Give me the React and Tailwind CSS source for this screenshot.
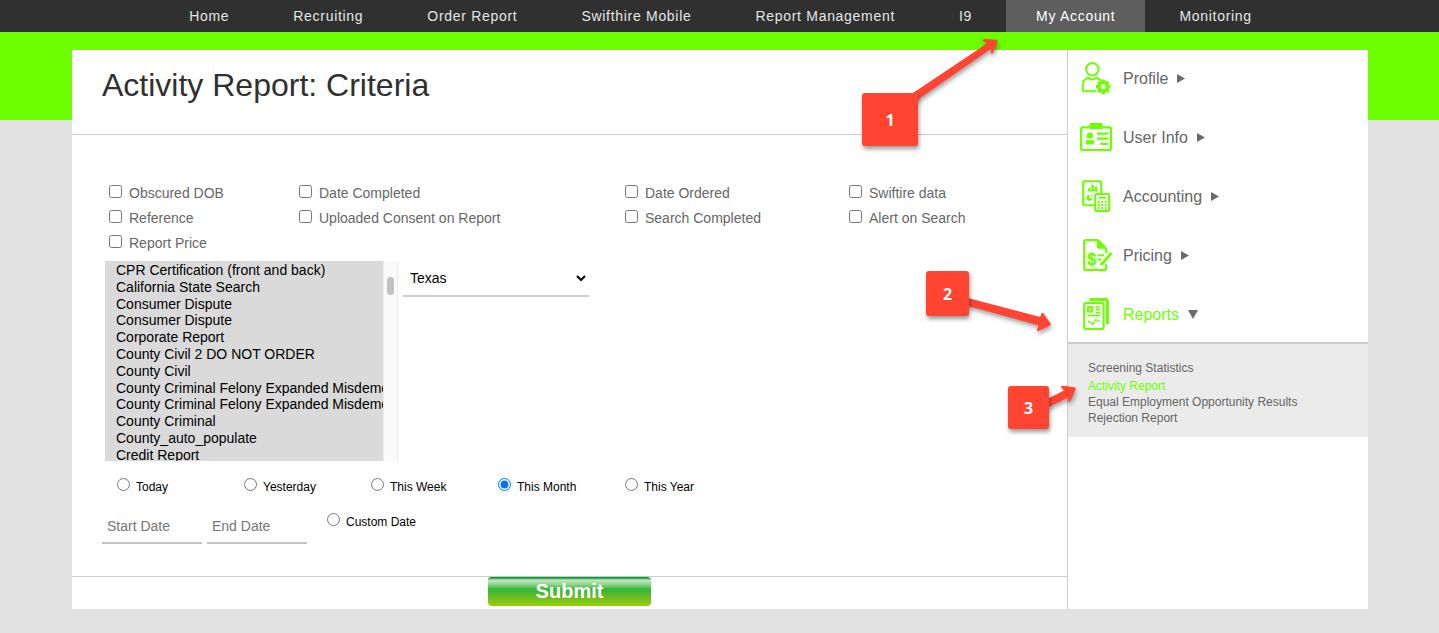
import React, { useState } from "react";

const navItems = [
  "Home",
  "Recruiting",
  "Order Report",
  "Swifthire Mobile",
  "Report Management",
  "I9",
  "My Account",
  "Monitoring",
];

const fields = [
  "Obscured DOB",
  "Date Completed",
  "Date Ordered",
  "Swiftire data",
  "Reference",
  "Uploaded Consent on Report",
  "Search Completed",
  "Alert on Search",
  "Report Price",
];

const searches = [
  "CPR Certification (front and back)",
  "California State Search",
  "Consumer Dispute",
  "Consumer Dispute",
  "Corporate Report",
  "County Civil 2 DO NOT ORDER",
  "County Civil",
  "County Criminal Felony Expanded Misdemeanor",
  "County Criminal Felony Expanded Misdemeanor",
  "County Criminal",
  "County_auto_populate",
  "Credit Report",
];

const ranges = ["Today", "Yesterday", "This Week", "This Month", "This Year"];

const GEAR_ANGLES = [0, 45, 90, 135];

function ProfileIcon() {
  return (
    <svg
      aria-hidden="true"
      className="h-8 w-8"
      fill="none"
      stroke="currentColor"
      strokeWidth="2"
      viewBox="0 0 32 32">
      <circle cx="12.3" cy="7.3" r="6.2" />
      <path
        d="M15.2 29.3H4.6q-1.8 0-1.8-1.8v-4.7q0-4.6 4.6-6.6l1.2-.4q3.7 3.4 7.4 0l1.2.4q2 .8 3 1.8"
        strokeLinecap="round"
        strokeLinejoin="round"
      />
      <circle cx="23.2" cy="24.8" r="4.200" strokeWidth="3.400" />
      {GEAR_ANGLES.map((angle) => (
        <path
          d="M23.2 17.600v2.6M23.2 29.400v2.6"
          key={angle}
          strokeWidth="3.400"
          transform={`rotate(${angle} 23.2 24.8)`}
        />
      ))}
    </svg>
  );
}

function UserInfoIcon() {
  return (
    <svg
      aria-hidden="true"
      className="h-8 w-8"
      fill="none"
      stroke="currentColor"
      strokeWidth="2.2"
      viewBox="0 0 32 32">
      <rect height="22.6" rx="1.5" width="29.800" x="1.1" y="6.4" />
      <rect
        fill="currentColor"
        height="6"
        rx="1"
        stroke="none"
        width="13"
        x="9.6"
        y="2"
      />
      <circle cx="9.8" cy="14.6" fill="currentColor" r="3.2" stroke="none" />
      <path
        d="M5.4 21.5q0-2.6 2.4-2.8 2 1 4 0 2.4.2 2.4 2.8 0 2-1.6 2H7q-1.6 0-1.6-2z"
        fill="currentColor"
        stroke="none"
      />
      <path d="M17.6 12.6h9.8M17.6 17.6h9.8M21 22.8h6.4" strokeLinecap="round" />
    </svg>
  );
}

function AccountingIcon() {
  return (
    <svg
      aria-hidden="true"
      className="h-8 w-8"
      fill="none"
      stroke="currentColor"
      strokeWidth="2.1"
      viewBox="0 0 32 32">
      <path
        d="M14.8 25.2H4.6q-1.4 0-1.4-1.4V2.6q0-1.4 1.4-1.4h15.2q1.4 0 1.4 1.4v10.6"
        strokeLinejoin="round"
      />
      <path d="M7.6 10.6h10.2" strokeWidth="1.6" />
      <path d="M9.4 10.4V8M12.6 10.4V4.8M15.800 10.4V6.800" strokeWidth="2.4" />
      <path
        d="M9.4 14.800v3.4h3a3 3 0 1 1-3-3.4zM11 14.4a2.6 2.6 0 0 1 2 2.2h-2z"
        fill="currentColor"
        stroke="none"
      />
      <rect height="17" rx="1.4" width="14" x="15.2" y="14" />
      <path d="M18.4 17.8h7.8" strokeWidth="1.8" />
      <path
        d="M17.8 22h9.4M17.8 25h9.4M17.8 28h9.4"
        strokeDasharray="2 1.4"
        strokeWidth="1.8"
      />
    </svg>
  );
}

function PricingIcon() {
  return (
    <svg
      aria-hidden="true"
      className="h-8 w-8"
      fill="none"
      stroke="currentColor"
      strokeWidth="2.2"
      viewBox="0 0 32 32">
      <path
        d="M18 1.2H5.8q-1.6 0-1.6 1.6v26.4q0 1.6 1.6 1.6h18.8q1.6 0 1.6-1.6v-4M26.2 9v5"
        strokeLinejoin="round"
      />
      <path
        d="M17 .3q2 .2 3.8 2l4.6 5q1.6 1.8 1.8 3.4-1.6-1-4.2-1h-4.2q-2 0-2-2V4.4Q16.800 1.6 17 .3z"
        fill="currentColor"
        stroke="none"
      />
      <path d="M17.6 16.2h6.6M17.6 20.6h4" strokeWidth="2" />
      <path d="M30.6 15 22.4 24.4" strokeLinecap="round" strokeWidth="2.8" />
      <path d="m20.800 22.6 2.8 2.4-3.800 2z" fill="currentColor" stroke="none" />
      <text
        className="font-bold"
        fill="currentColor"
        fontSize="16"
        stroke="currentColor"
        strokeWidth="0.5"
        textAnchor="middle"
        x="11.6"
        y="26">
        $
      </text>
    </svg>
  );
}

function ReportsIcon() {
  return (
    <svg
      aria-hidden="true"
      className="h-8 w-8"
      fill="none"
      stroke="currentColor"
      strokeWidth="2.1"
      viewBox="0 0 32 32">
      <path d="M9.4 1.4h16q2 0 2 2V26" strokeWidth="3" />
      <rect height="26" rx="1.6" width="19.4" x="4.2" y="5" />
      <rect height="4.4" width="4.2" x="8" y="9.2" />
      <path d="M15.6 9h4.800M15.6 11.8h4.800M15.6 14.6h4.800" strokeWidth="1.6" />
      <path d="M7.4 17.6h13" strokeWidth="1.6" />
      <path
        d="m8 23 4.800 3.400 2.800-4.8 4.800 2.4"
        strokeDasharray="2.8 .5"
        strokeWidth="1.6"
      />
    </svg>
  );
}

const sections = [
  { label: "Profile", Icon: ProfileIcon },
  { label: "User Info", Icon: UserInfoIcon },
  { label: "Accounting", Icon: AccountingIcon },
  { label: "Pricing", Icon: PricingIcon },
  { label: "Reports", Icon: ReportsIcon, open: true },
];

function TopNav() {
  return (
    <nav className="flex h-8 justify-center gap-1 bg-[#303030] pl-0.5 text-sm tracking-wider text-[#e4e4e4]">
      {navItems.map((item) => (
        <a
          className={
            item === "My Account"
              ? "flex items-center bg-[#5e5e5e] px-[30px] whitespace-nowrap text-white"
              : "flex items-center px-[30px] whitespace-nowrap"
          }
          href="#"
          key={item}>
          {item}
        </a>
      ))}
    </nav>
  );
}

function CriteriaForm() {
  const [range, setRange] = useState("This Month");

  return (
    <form onSubmit={(e) => e.preventDefault()}>
      <div className="px-[30px] pt-[46px] pb-8">
        <div className="grid grid-cols-[190px_326px_224px_auto] pl-[7px] text-sm text-[#666]">
          {fields.map((field) => (
            <label
              className="flex items-baseline gap-[7px] leading-[25px]"
              key={field}>
              <input className="h-[13px] w-[13px]" type="checkbox" />
              {field}
            </label>
          ))}
        </div>

        <div className="mt-[5px] flex items-start gap-[5px] pl-[3px] text-sm text-black">
          <div className="flex h-[200px] w-[293px]">
            <select
              aria-label="Searches"
              className="h-full w-[278px] appearance-none overflow-hidden bg-[#dadada] pt-px pl-[11px] leading-none"
              multiple
              size={12}>
              {searches.map((search, index) => (
                <option className="p-0" key={index}>
                  {search}
                </option>
              ))}
            </select>
            <div className="flex-1 border-x border-[#ebebeb] bg-[#fafafa] px-[3px] pt-4">
              <div className="h-[18px] rounded-full bg-[#c1c1c1]" />
            </div>
          </div>

          <div className="relative">
            <select
              aria-label="State"
              className="h-9 w-[186px] appearance-none border-b-2 border-[#ccc] bg-white pl-[7px]">
              <option>Texas</option>
            </select>
            <svg
              aria-hidden="true"
              className="pointer-events-none absolute top-[13px] right-[3px] h-2 w-[10px]"
              fill="none"
              stroke="black"
              strokeWidth="2"
              viewBox="0 0 10 8">
              <path d="m1 2 4 4 4-4" />
            </svg>
          </div>
        </div>

        <div className="mt-[14px] grid grid-cols-[repeat(5,127px)] pl-[15px] text-xs text-black">
          {ranges.map((name) => (
            <label
              className="flex items-baseline gap-1.5 leading-6"
              key={name}>
              <input
                checked={range === name}
                className="h-[13px] w-[13px]"
                name="range"
                onChange={() => setRange(name)}
                type="radio"
              />
              {name}
            </label>
          ))}
        </div>

        <div className="mt-[11px] flex items-start gap-[5px]">
          <input
            aria-label="Start Date"
            className="h-[34px] w-[100px] border-b-2 border-[#c4c4c4] px-[5px] text-sm placeholder:text-[#757575]"
            placeholder="Start Date"
            type="text"
          />
          <input
            aria-label="End Date"
            className="h-[34px] w-[100px] border-b-2 border-[#c4c4c4] px-[5px] text-sm placeholder:text-[#757575]"
            placeholder="End Date"
            type="text"
          />
          <label className="flex items-baseline gap-1.5 pl-[15px] text-xs leading-6 text-black">
            <input
              checked={range === "Custom Date"}
              className="h-[13px] w-[13px]"
              name="range"
              onChange={() => setRange("Custom Date")}
              type="radio"
            />
            Custom Date
          </label>
        </div>
      </div>

      <div className="flex justify-center border-t border-[#ccc] pb-[3px]">
        <button
          className="h-[29px] w-[163px] rounded-[4px] border-t border-[#00983a] bg-linear-[to_bottom,#1fa63c_0%,#c4e8bf_8%,#8ed28a_24%,#3cba3c_38%,#35b934_46%,#64b72c_62%,#96d200_100%] pb-[2px] text-xl leading-[26px] font-bold text-white"
          type="submit">
          Submit
        </button>
      </div>
    </form>
  );
}

function Sidebar() {
  return (
    <aside className="relative w-[301px] shrink-0 border-l border-[#ccc]">
      <ul className="flex flex-col gap-[3px]">
        {sections.map(({ label, Icon, open }) => (
          <li key={label}>
            <a
              className="flex h-14 items-center gap-[9px] pl-3 text-[#6dff00]"
              href="#">
              <Icon />
              <span
                className={
                  open ? "pt-0.5 pl-0.5 text-[#6dff00]" : "pt-0.5 pl-0.5 text-[#666]"
                }>
                {label}
              </span>
              <svg
                aria-hidden="true"
                className="h-[10px] w-[10px] text-[#6b6b6b]"
                fill="currentColor"
                viewBox="0 0 10 10">
                <path d={open ? "M0 1h10L5 10z" : "M0 1v9l8-4.500z"} />
              </svg>
            </a>
          </li>
        ))}
      </ul>
      <ul className="border-t-2 border-[#ccc] bg-[#ebebeb] px-5 pt-4 pb-[11px] text-xs text-[#666]">
        <li className="pb-[2px]">
          <a href="#">Screening Statistics</a>
        </li>
        <li>
          <a className="text-[#6dff00]" href="#">
            Activity Report
          </a>
        </li>
        <li>
          <a href="#">Equal Employment Opportunity Results</a>
        </li>
        <li>
          <a href="#">Rejection Report</a>
        </li>
      </ul>
      <Callouts />
    </aside>
  );
}

// Numbered steps that float over the page, anchored to the sidebar's edge
function Callouts() {
  return (
    <div className="pointer-events-none absolute -top-[50px] -left-[216px] font-['Open_Sans',sans-serif] text-base font-bold text-white">
      <svg
        aria-hidden="true"
        className="absolute top-0 left-0 h-[450px] w-[240px] drop-shadow-[1px_3px_2px_rgba(0,0,0,0.35)]"
        fill="#ff4532"
        viewBox="852 0 240 450">
        <path d="M910 95 987 43.5 982.7 41Q982.300 38.800 985 39L996 39.800Q998.300 40 997.300 42L993 53Q992 54.500 991 52.800L990.800 49 915 101.500z" />
        <path d="M966 297.5 1040 317 1041.500 313.300Q1042.500 312.300 1043.500 313.500L1050.500 323.500Q1051.200 325 1049.500 325.800L1038.500 331Q1036.700 331.200 1037 329.500L1038.500 325.200 966 305.600z" />
        <path d="M1046 399.500 1064 390.500 1061.200 387.500Q1060.500 385.500 1063 385.700L1074.500 387.200Q1076.500 387.500 1075.500 389.500L1070.500 401Q1069.500 402.500 1068.500 401L1068 397.600 1046 408.500z" />
      </svg>
      <span className="absolute top-[93px] left-[10px] flex h-[53px] w-14 items-center justify-center rounded-[3px] bg-[#ff4532] shadow-[1px_3px_4px_rgba(0,0,0,0.4)]">
        1
      </span>
      <span className="absolute top-[271px] left-[74px] flex h-[45px] w-[43px] items-center justify-center rounded-[3px] bg-[#ff4532] shadow-[1px_3px_4px_rgba(0,0,0,0.4)]">
        2
      </span>
      <span className="absolute top-[386px] left-[156px] flex h-[43px] w-[41px] items-center justify-center rounded-[3px] bg-[#ff4532] shadow-[1px_3px_4px_rgba(0,0,0,0.4)]">
        3
      </span>
    </div>
  );
}

export default function App() {
  return (
    <div className="min-h-screen bg-[#e2e2e2] font-['Liberation_Sans',Arial,sans-serif]">
      <TopNav />
      <div className="bg-linear-[to_bottom,#6dff00_88px,transparent_88px] pt-[18px] pr-[71px] pb-6 pl-[72px]">
        <main className="flex bg-white">
          <section className="min-w-0 flex-1">
            <h1 className="border-b border-[#ccc] px-[30px] pt-[15px] pb-[29px] text-[32px] leading-10 text-[#303030]">
              Activity Report: Criteria
            </h1>
            <CriteriaForm />
          </section>
          <Sidebar />
        </main>
      </div>
    </div>
  );
}
